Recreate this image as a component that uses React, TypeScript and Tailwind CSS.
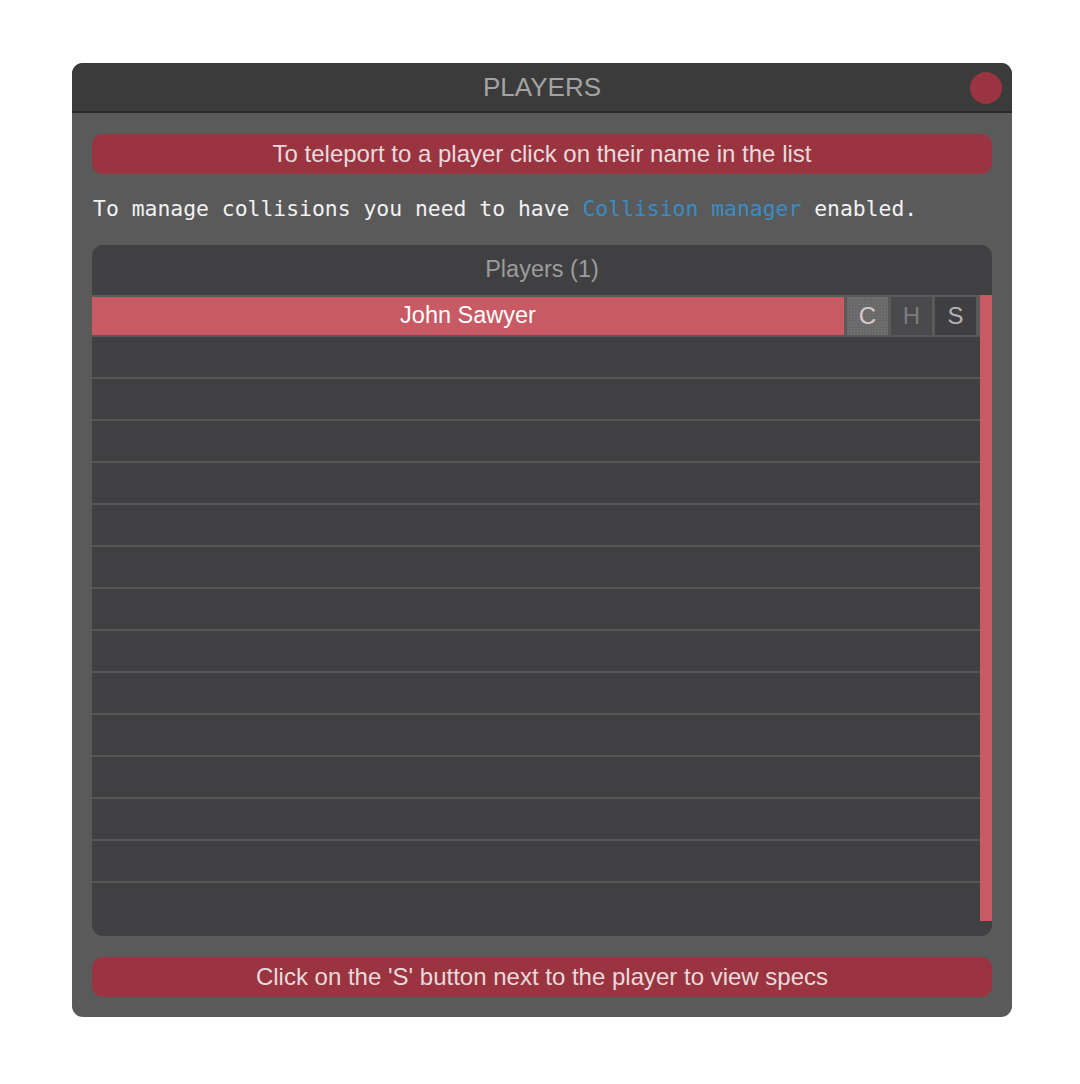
const emptyRows = Array.from({ length: 15 });

const App = () => {
  return (
    <div className="min-h-screen bg-white pl-[72px] pt-[63px] font-['Liberation_Sans',Arial,sans-serif]">
      <div className="w-[940px] rounded-[11px] overflow-hidden bg-[#5a5a5a]">
        {/* title bar */}
        <div className="relative h-[50px] bg-[#3b3b3b] flex items-center justify-center border-b-2 border-[#2a2a2a]">
          <span className="text-[26px] text-[#a3a3a3] leading-none">PLAYERS</span>
          <button className="absolute right-[10px] top-[9px] w-[32px] h-[32px] rounded-full bg-[#9a3440]" />
        </div>

        <div className="px-[20px] pt-[21px] pb-[20px]">
          <div className="h-[40px] rounded-[11px] bg-[#9a3440] flex items-center justify-center text-[24px] text-[#e8dadc]">
            To teleport to a player click on their name in the list
          </div>

          <div className="h-[71px] flex items-center pl-[1px] font-['DejaVu_Sans_Mono',monospace] text-[21.4px] text-[#f2f2f2] whitespace-pre">
            To manage collisions you need to have <span className="text-[#3a8cc4]">Collision manager</span> enabled.
          </div>

          {/* players list */}
          <div className="h-[691px] rounded-[11px] bg-[#404042] pb-[15px] flex flex-col overflow-hidden">
            <div className="h-[50px] shrink-0 flex items-center justify-center text-[23.5px] text-[#9c9c9c]">
              Players (1)
            </div>
            <div className="flex-1 flex overflow-hidden">
              <div className="flex-1 flex flex-col overflow-hidden">
                <div className="h-[40px] shrink-0 border-t-2 border-[#5a5a5a] bg-[#5a5a5a] flex gap-[3px] pr-[4px]">
                  <div className="flex-1 bg-[#c85a64] flex items-center justify-center text-[23.5px] text-white">
                    John Sawyer
                  </div>
                  <div className="w-[41px] bg-[#696969] bg-[radial-gradient(#7a7a7a_0.6px,transparent_0.8px)] bg-[length:3px_3px] flex items-center justify-center text-[24px] text-[#d8c6cc]">
                    C
                  </div>
                  <div className="w-[41px] bg-[#4a4a4c] flex items-center justify-center text-[24px] text-[#7c7c7c]">
                    H
                  </div>
                  <div className="w-[41px] bg-[#3f3f41] flex items-center justify-center text-[24px] text-[#b3b3b3]">
                    S
                  </div>
                </div>
                {emptyRows.map((_, i) => (
                  <div key={i} className="h-[42px] shrink-0 border-t-2 border-[#575757]" />
                ))}
              </div>
              <div className="w-[12px] bg-[#c85a64]" />
            </div>
          </div>

          <div className="mt-[21px] h-[40px] rounded-[11px] bg-[#9a3440] flex items-center justify-center text-[24px] text-[#e8dadc]">
            Click on the 'S' button next to the player to view specs
          </div>
        </div>
      </div>
    </div>
  );
};

export default App;
